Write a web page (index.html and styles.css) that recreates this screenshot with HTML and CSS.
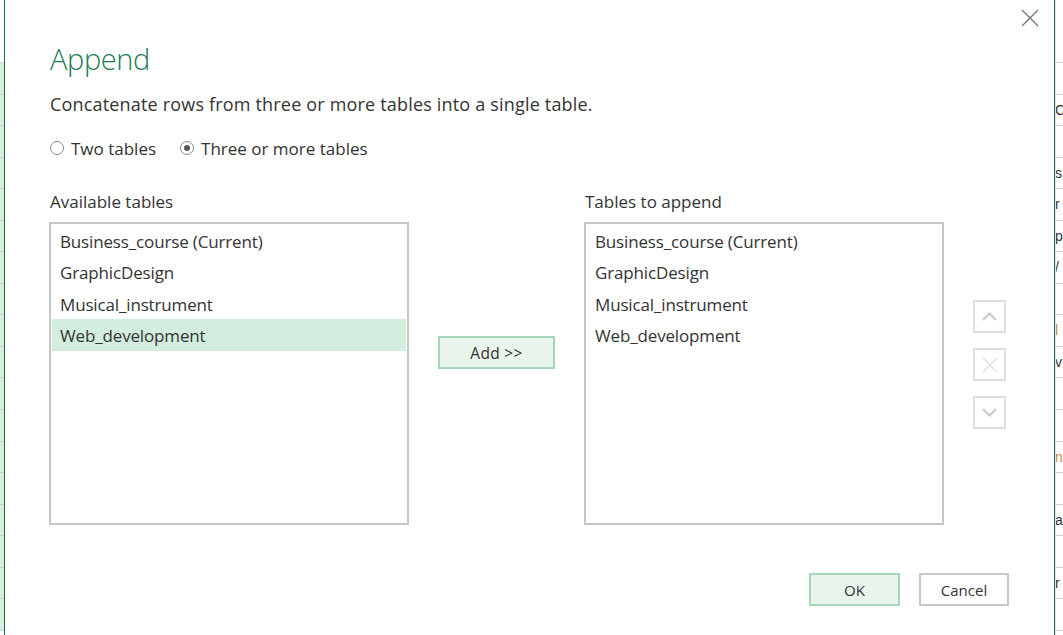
FILE: index.html
```html
<!DOCTYPE html>
<html>
<head>
<meta charset="utf-8">
<link rel="stylesheet" href="styles.css">
</head>
<body>
<div class="screen">
  <div class="sheet sheet-left">
    <div class="sheet-head"></div>
    <div class="cell sel"></div><div class="cell sel"></div><div class="cell sel"></div><div class="cell sel"></div>
    <div class="cell sel"></div><div class="cell sel"></div><div class="cell sel"></div><div class="cell sel"></div>
    <div class="cell sel"></div><div class="cell sel"></div><div class="cell sel"></div><div class="cell sel"></div>
    <div class="cell sel"></div><div class="cell sel"></div><div class="cell sel"></div><div class="cell sel"></div>
    <div class="cell sel"></div><div class="cell sel"></div>
  </div>

  <div class="dialog">
    <div class="titlebar">
      <button class="close" aria-label="Close">
        <svg width="18" height="18" viewBox="0 0 18 18"><path d="M1 1 L17 17 M17 1 L1 17" stroke="#707070" stroke-width="1.2" fill="none"/></svg>
      </button>
    </div>
    <div class="body">
      <h1 class="title">Append</h1>
      <p class="desc">Concatenate rows from three or more tables into a single table.</p>
      <div class="radios">
        <label class="radio"><span class="dot"></span>Two tables</label>
        <label class="radio checked"><span class="dot"></span>Three or more tables</label>
      </div>

      <div class="panes">
        <div class="pane">
          <div class="pane-label">Available tables</div>
          <div class="listbox">
            <div class="item">Business_course (Current)</div>
            <div class="item">GraphicDesign</div>
            <div class="item">Musical_instrument</div>
            <div class="item selected">Web_development</div>
          </div>
        </div>
        <div class="middle">
          <button class="btn btn-primary add">Add &gt;&gt;</button>
        </div>
        <div class="pane">
          <div class="pane-label">Tables to append</div>
          <div class="listbox">
            <div class="item">Business_course (Current)</div>
            <div class="item">GraphicDesign</div>
            <div class="item">Musical_instrument</div>
            <div class="item">Web_development</div>
          </div>
        </div>
        <div class="side">
          <button class="icon-btn" aria-label="Move up">
            <svg width="15" height="9" viewBox="0 0 15 9"><path d="M1 8 L7.5 1.5 L14 8" stroke="#c9c9c9" stroke-width="2.2" fill="none"/></svg>
          </button>
          <button class="icon-btn" aria-label="Remove">
            <svg width="16" height="16" viewBox="0 0 16 16"><path d="M1 1 L15 15 M15 1 L1 15" stroke="#e2e2e2" stroke-width="1.5" fill="none"/></svg>
          </button>
          <button class="icon-btn" aria-label="Move down">
            <svg width="15" height="9" viewBox="0 0 15 9"><path d="M1 1 L7.5 7.5 L14 1" stroke="#c9c9c9" stroke-width="2.2" fill="none"/></svg>
          </button>
        </div>
      </div>

      <div class="footer">
        <button class="btn btn-primary ok">OK</button>
        <button class="btn cancel">Cancel</button>
      </div>
    </div>
  </div>

  <div class="sheet sheet-right">
    <div class="sheet-head"></div>
    <div class="cell"></div>
    <div class="cell"><span>C</span></div>
    <div class="cell"></div>
    <div class="cell"><span>s</span></div>
    <div class="cell"><span>r</span></div>
    <div class="cell"><span>p</span></div>
    <div class="cell"><span>/</span></div>
    <div class="cell"></div>
    <div class="cell"><span class="warm">l</span></div>
    <div class="cell"><span>v</span></div>
    <div class="cell"></div>
    <div class="cell"></div>
    <div class="cell"><span class="warm">n</span></div>
    <div class="cell"></div>
    <div class="cell"><span>a</span></div>
    <div class="cell"></div>
    <div class="cell"><span>r</span></div>
    <div class="cell"></div>
  </div>
</div>
</body>
</html>
```

FILE: styles.css
```css
* { box-sizing: border-box; }

html, body {
  margin: 0;
  padding: 0;
}

body {
  width: 1063px;
  height: 635px;
  overflow: hidden;
  background: #ffffff;
  font-family: "Segoe UI", "Open Sans", "Noto Sans", sans-serif;
  color: #333333;
}

.screen {
  display: flex;
  height: 635px;
}

/* spreadsheet behind the dialog */
.sheet {
  display: flex;
  flex-direction: column;
  overflow: hidden;
  flex: none;
}

.sheet-left { width: 4px; }
.sheet-right {
  width: 8px;
  border-left: 1px solid #e4e4e4;
}

.sheet-head {
  height: 63px;
  flex: none;
  border-bottom: 1px solid #d0d0d0;
}

.cell {
  height: 31.55px;
  flex: none;
  border-bottom: 1px solid #d0d0d0;
  font-family: "Liberation Sans", sans-serif;
  font-size: 14px;
  line-height: 30px;
  color: #333;
  white-space: nowrap;
  overflow: hidden;
}

.cell.sel { background: #d5efdf; }
.cell span { display: block; margin-left: -1px; }
.cell .warm { color: #c98a3a; }

/* dialog */
.dialog {
  width: 1051px;
  flex: none;
  height: 635px;
  border-left: 1px solid #1e7145;
  border-right: 1px solid #1e7145;
  background: #ffffff;
  display: flex;
  flex-direction: column;
}

.titlebar {
  display: flex;
  justify-content: flex-end;
  padding: 9px 15px 0 0;
  height: 30px;
}

.close {
  width: 18px;
  height: 18px;
  padding: 0;
  border: 0;
  background: transparent;
  display: flex;
}

.body {
  padding: 0 45px 0 45px;
  flex: 1;
  display: flex;
  flex-direction: column;
}

.title {
  margin: 10px 0 0 0;
  font-weight: 300;
  font-size: 29px;
  line-height: 38px;
  color: #1f7a55;
  letter-spacing: -0.4px;
}

.desc {
  margin: 14px 0 0 0;
  font-size: 18px;
  line-height: 24px;
  letter-spacing: 0.18px;
  color: #333333;
}

.radios {
  display: flex;
  gap: 24px;
  margin-top: 20px;
  height: 24px;
  align-items: center;
}

.radio {
  display: flex;
  align-items: center;
  font-size: 17px;
  color: #333333;
}

.radio .dot {
  width: 14px;
  height: 14px;
  border: 1px solid #8a8a8a;
  border-radius: 50%;
  margin: 0 7px 0 0;
  display: flex;
  align-items: center;
  justify-content: center;
  background: #fff;
}

.radio.checked .dot::after {
  content: "";
  width: 6px;
  height: 6px;
  border-radius: 50%;
  background: #555555;
}

/* panes */
.panes {
  display: flex;
  margin-top: 30px;
  margin-left: -1px;
}

.pane { width: 360px; flex: none; }

.pane-label {
  font-size: 17px;
  line-height: 24px;
  height: 32px;
  padding-left: 1px;
  color: #333333;
}

.listbox {
  height: 303px;
  border: 2px solid #c6c6c6;
  padding: 0.5px 1px 0 1px;
}

.item {
  height: 31.5px;
  line-height: 33px;
  padding-left: 8px;
  font-size: 17px;
  letter-spacing: -0.15px;
  color: #333333;
  white-space: nowrap;
}

.item.selected { background: #d3eedf; }

.middle {
  width: 175px;
  flex: none;
  display: flex;
  justify-content: center;
  padding-top: 146px;
}

.btn {
  height: 33px;
  font-family: inherit;
  font-size: 15px;
  color: #333333;
  background: #ffffff;
  border: 2px solid #c8c8c8;
  padding: 0;
}

.btn-primary {
  background: #e9f4ed;
  border-color: #a3d7b8;
}

.add { width: 117px; font-size: 15.5px; letter-spacing: 0.3px; }

.side {
  margin-left: 29px;
  padding-top: 110px;
  display: flex;
  flex-direction: column;
  gap: 15px;
}

.icon-btn {
  width: 33px;
  height: 33px;
  border: 2px solid #dedede;
  background: #ffffff;
  padding: 0;
  display: flex;
  align-items: center;
  justify-content: center;
}

.footer {
  display: flex;
  justify-content: flex-end;
  gap: 19px;
  margin-top: 48px;
}

.ok { width: 91px; height: 33px; }
.cancel { width: 90px; height: 33px; }
```
